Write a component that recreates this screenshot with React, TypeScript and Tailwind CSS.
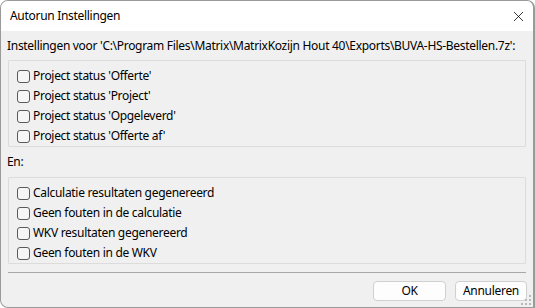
import { X } from "lucide-react";

const statusItems = [
  "Project status 'Offerte'",
  "Project status 'Project'",
  "Project status 'Opgeleverd'",
  "Project status 'Offerte af'",
];

const resultItems = [
  "Calculatie resultaten gegenereerd",
  "Geen fouten in de calculatie",
  "WKV resultaten gegenereerd",
  "Geen fouten in de WKV",
];

function CheckRow({ label }: { label: string }) {
  return (
    <label className="flex h-[20px] items-center gap-[3px]">
      <span className="h-[13px] w-[13px] rounded-[3px] border border-[#5a5a5a] bg-[#f6f6f6]" />
      <span>{label}</span>
    </label>
  );
}

function Group({ items }: { items: string[] }) {
  return (
    <div className="mx-[7px] flex flex-col rounded-[1px] border border-[#dcdcdc] pl-[8px] pt-[5px]">
      {items.map((t) => (
        <CheckRow key={t} label={t} />
      ))}
    </div>
  );
}

function Grip() {
  const dots = [
    [8, 0],
    [4, 4],
    [8, 4],
    [0, 8],
    [4, 8],
    [8, 8],
  ];
  return (
    <svg width="11" height="11" viewBox="0 0 11 11" className="absolute bottom-[1px] right-[1px]">
      {dots.map(([x, y]) => (
        <rect key={`${x}-${y}`} x={x} y={y} width="2" height="2" fill="#b8b8b8" />
      ))}
    </svg>
  );
}

export default function App() {
  return (
    <div className="h-[308px] w-[535px] bg-white font-['Segoe_UI','Noto_Sans',sans-serif] text-[12px] leading-none tracking-[-0.3px] text-black">
      <div className="relative flex h-[308px] w-[535px] flex-col overflow-hidden rounded-t-[8px] rounded-bl-[8px] border border-r-2 border-[#9a9a9a] bg-[#f0f0f0]">
        <div className="flex h-[30px] shrink-0 items-center justify-between bg-white pl-[9px] pr-[5px]">
          <span>Autorun Instellingen</span>
          <X size={17} strokeWidth={1.1} className="mr-[1px]" />
        </div>
        <div className="flex h-[29px] items-center pl-[6px]">
          Instellingen voor 'C:\Program Files\Matrix\MatrixKozijn Hout 40\Exports\BUVA-HS-Bestellen.7z':
        </div>
        <Group items={statusItems} />
        <div className="flex h-[30px] items-center pl-[6px]">En:</div>
        <Group items={resultItems} />
        <div className="mx-[7px] mt-[8px] h-px bg-[#a8a8a8]" />
        <div className="flex justify-end gap-[9px] pr-[6px] pt-[8px]">
          <button className="h-[20px] w-[73px] rounded-[4px] border border-[#d0d0d0] bg-[#fdfdfd]">OK</button>
          <button className="h-[20px] w-[72px] rounded-[4px] border border-[#d0d0d0] bg-[#fdfdfd]">Annuleren</button>
        </div>
        <Grip />
      </div>
    </div>
  );
}
